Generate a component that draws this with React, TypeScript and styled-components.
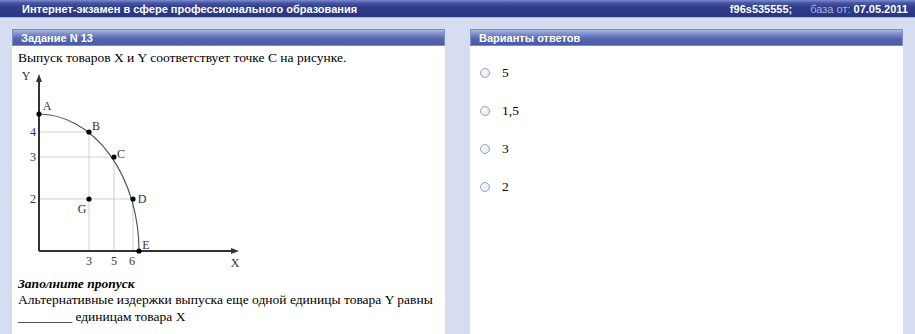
import React from 'react';
import styled, { createGlobalStyle } from 'styled-components';

const GlobalStyle = createGlobalStyle`
  html, body { margin: 0; padding: 0; }
  body { background: #d6ddf1; }
`;

const Page = styled.div`
  min-height: 334px;
  display: flex;
  flex-direction: column;
  font-family: "Liberation Serif", "Times New Roman", serif;
`;

const TopBar = styled.div`
  height: 17px;
  display: flex;
  align-items: center;
  padding: 0 7px 0 22px;
  background: linear-gradient(#7d8bcb 0, #4656a6 3px, #2f3d8b 7px, #293681 100%);
  border-bottom: 1px solid #a6b1dd;
  font-family: "Liberation Sans", Arial, sans-serif;
  font-weight: bold;
  font-size: 11px;
  color: #fff;
`;

const Title = styled.div`
  flex: 1;
`;

const Meta = styled.span<{ $muted?: boolean }>`
  margin-left: ${p => (p.$muted ? '18px' : '0')};
  color: ${p => (p.$muted ? '#a9b2dc' : '#fff')};
  font-weight: ${p => (p.$muted ? 'normal' : 'bold')};
`;

const Main = styled.div`
  flex: 1;
  display: grid;
  grid-template-columns: 1fr 1fr;
  gap: 25px;
  padding: 11px 12px 0;
`;

const Panel = styled.section`
  display: flex;
  flex-direction: column;
  background: #fff;
  min-width: 0;
`;

const PanelHead = styled.div`
  height: 17px;
  box-sizing: border-box;
  display: flex;
  align-items: center;
  padding-left: 8px;
  background: linear-gradient(#a9b5e3 0, #7282c3 35%, #5565af 60%, #4a5aa5 100%);
  border: 1px solid #7e8cc4;
  font-family: "Liberation Sans", Arial, sans-serif;
  font-weight: bold;
  font-size: 11px;
  color: #fff;
`;

const TaskBody = styled.div`
  padding: 4px 6px 0;
  font-size: 13.5px;
  color: #000;
`;

const Para = styled.p<{ $bold?: boolean }>`
  margin: 0;
  line-height: 16.5px;
  white-space: nowrap;
  font-weight: ${p => (p.$bold ? 'bold' : 'normal')};
  font-style: ${p => (p.$bold ? 'italic' : 'normal')};
`;

const Chart = styled.svg`
  display: block;
  width: 240px;
  height: 207px;
  margin-top: 2px;
`;

const Options = styled.div`
  padding: 8px 10px 0;
  display: flex;
  flex-direction: column;
`;

const Option = styled.label`
  height: 38px;
  display: flex;
  align-items: center;
  gap: 7px;
  font-size: 13.5px;
  color: #000;
`;

const Radio = styled.span`
  width: 10px;
  height: 10px;
  box-sizing: border-box;
  border-radius: 50%;
  border: 1px solid #9aa5c6;
  background: radial-gradient(circle at 40% 40%, #fafbff 0, #e4e8f2 70%);
  margin-right: 5px;
`;

const points = [
  { x: 39, y: 113, l: 'A', lx: 47, ly: 109 },
  { x: 89, y: 131, l: 'B', lx: 96, ly: 129 },
  { x: 114, y: 156, l: 'C', lx: 121, ly: 157 },
  { x: 133, y: 198, l: 'D', lx: 142, ly: 202 },
  { x: 139, y: 250, l: 'E', lx: 146, ly: 248 },
  { x: 89, y: 198, l: 'G', lx: 82, ly: 212 },
];

const Diagram = () => (
  <Chart viewBox="18 68 240 207">
    <g stroke="#d0d0d0" strokeWidth="1">
      <line x1="39" y1="131" x2="89" y2="131" />
      <line x1="39" y1="156" x2="114" y2="156" />
      <line x1="39" y1="198" x2="133" y2="198" />
      <line x1="89" y1="131" x2="89" y2="250" />
      <line x1="114" y1="156" x2="114" y2="250" />
      <line x1="133" y1="198" x2="133" y2="250" />
    </g>
    <path d="M39 113 A101 137 0 0 1 139 250" fill="none" stroke="#555" strokeWidth="1.2" />
    <g stroke="#333" strokeWidth="2">
      <line x1="39" y1="250" x2="39" y2="80" />
      <line x1="39" y1="250" x2="232" y2="250" />
    </g>
    <polygon points="39,73 36,81 42,81" fill="#333" />
    <polygon points="239,250 231,247 231,253" fill="#333" />
    {points.map(p => (
      <circle key={p.l} cx={p.x} cy={p.y} r="2.6" fill="#000" />
    ))}
    <g fontFamily="Liberation Serif, serif" fontSize="12" fill="#333">
      {points.map(p => (
        <text key={p.l} x={p.lx} y={p.ly} textAnchor="middle">{p.l}</text>
      ))}
      <text x="26" y="79" textAnchor="middle">Y</text>
      <text x="235" y="266" textAnchor="middle">X</text>
      <text x="33" y="135" textAnchor="middle">4</text>
      <text x="33" y="160" textAnchor="middle">3</text>
      <text x="33" y="202" textAnchor="middle">2</text>
      <text x="89" y="264" textAnchor="middle">3</text>
      <text x="114" y="264" textAnchor="middle">5</text>
      <text x="132" y="264" textAnchor="middle">6</text>
    </g>
  </Chart>
);

const answers = ['5', '1,5', '3', '2'];

export default function App() {
  return (
    <Page>
      <GlobalStyle />
      <TopBar>
        <Title>Интернет-экзамен в сфере профессионального образования</Title>
        <Meta>f96s535555;</Meta>
        <Meta $muted>база от: </Meta>
        <Meta>&nbsp;07.05.2011</Meta>
      </TopBar>
      <Main>
        <Panel>
          <PanelHead>Задание N 13</PanelHead>
          <TaskBody>
            <Para>Выпуск товаров X и Y соответствует точке С на рисунке.</Para>
            <Diagram />
            <Para $bold>Заполните пропуск</Para>
            <Para>Альтернативные издержки выпуска еще одной единицы товара Y равны</Para>
            <Para>________ единицам товара X</Para>
          </TaskBody>
        </Panel>
        <Panel>
          <PanelHead>Варианты ответов</PanelHead>
          <Options>
            {answers.map(a => (
              <Option key={a}>
                <Radio />
                {a}
              </Option>
            ))}
          </Options>
        </Panel>
      </Main>
    </Page>
  );
}
